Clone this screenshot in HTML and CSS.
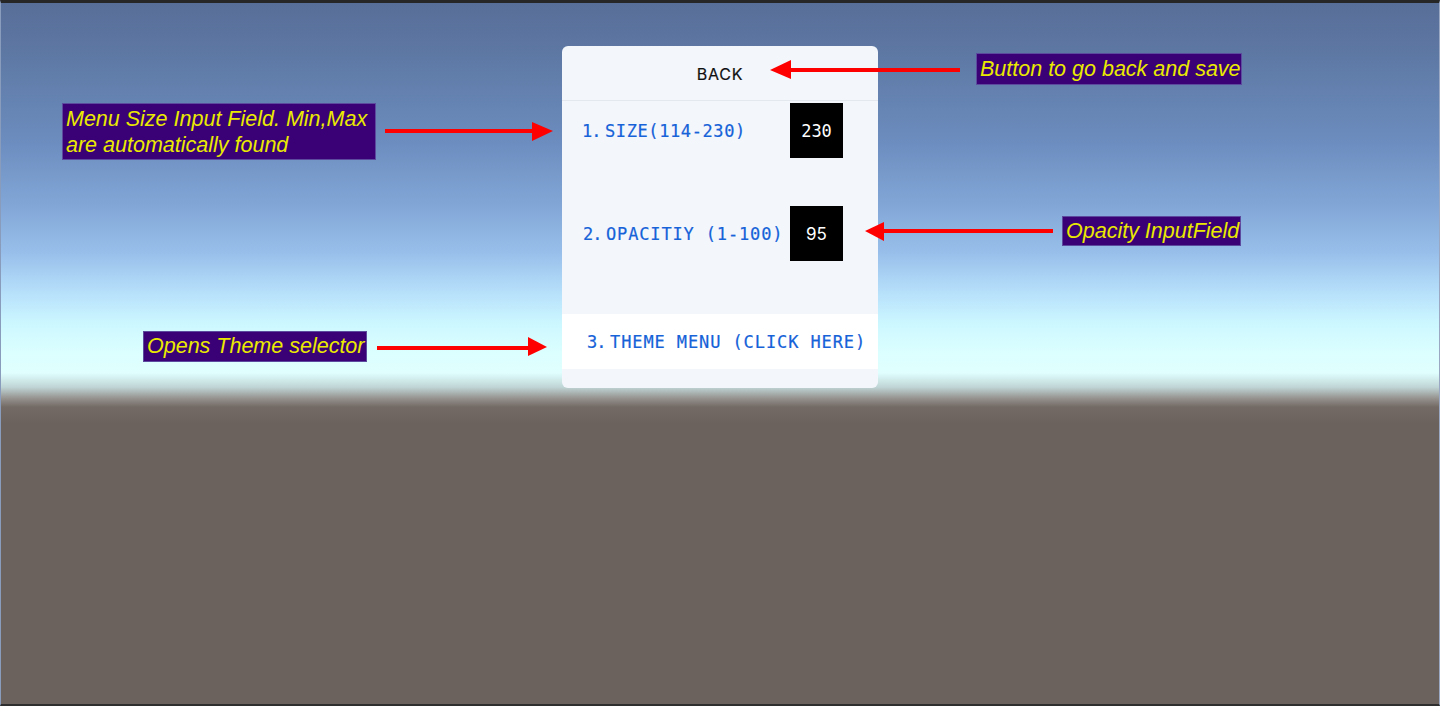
FILE: index.html
```html
<!DOCTYPE html>
<html>
<head>
<meta charset="utf-8">
<link rel="stylesheet" href="styles.css">
</head>
<body>
<div class="scene">
  <div class="panel">
    <div class="header">BACK</div>
    <div class="row row-size">
      <span class="label"><span class="num">1.</span>SIZE(114-230)</span>
      <div class="field mono">230</div>
    </div>
    <div class="row row-opacity">
      <span class="label"><span class="num">2.</span>OPACITIY (1-100)</span>
      <div class="field">95</div>
    </div>
    <div class="theme"><span class="num">3.</span>THEME MENU (CLICK HERE)</div>
  </div>

  <div class="note note-size">Menu Size Input Field. Min,Max<br>are automatically found</div>
  <div class="note note-back">Button to go back and save</div>
  <div class="note note-opacity">Opacity InputField</div>
  <div class="note note-theme">Opens Theme selector</div>

  <svg class="arrows" width="1440" height="706" viewBox="0 0 1440 706">
    <g fill="#ff0000" stroke="none">
      <rect x="385" y="129" width="150" height="4"/>
      <polygon points="532,122 553,131 532,141"/>
      <rect x="789" y="68" width="171" height="4"/>
      <polygon points="791,60 770,70 791,79"/>
      <rect x="882" y="229" width="171" height="4"/>
      <polygon points="884,222 865,231 884,241"/>
      <rect x="377" y="346" width="153" height="4"/>
      <polygon points="528,337 547,347 528,356"/>
    </g>
  </svg>
</div>
</body>
</html>
```

FILE: styles.css
```css
* { box-sizing: border-box; }
html, body { margin: 0; padding: 0; }
body { width: 1440px; height: 706px; overflow: hidden; background: #262626; }

.scene {
  position: relative;
  width: 1440px;
  height: 706px;
  padding-top: 46px;
  border-top: 3px solid #262626;
  border-left: 1px solid #8a9cbc;
  border-right: 1px solid #9aa8c4;
  border-bottom: 2px solid #2e2e2e;
  background: linear-gradient(to bottom,
    #576e98 0px,
    #5f7aa6 60px,
    #6c8dbf 140px,
    #81a6d6 200px,
    #98bfea 250px,
    #b7e0fb 290px,
    #ccf7ff 320px,
    #dcffff 350px,
    #e0fefe 370px,
    #c0d6d6 384px,
    #938f8b 396px,
    #736a65 404px,
    #6b625d 420px,
    #6b625d 100%);
  font-family: "Liberation Sans", Arial, sans-serif;
}

.panel {
  width: 316px;
  height: 342px;
  margin: 0 auto;
  position: relative;
  top: -3px;
  background: #f3f7fc;
  border-radius: 6px;
  display: flex;
  flex-direction: column;
  overflow: hidden;
}

.header {
  height: 55px;
  border-bottom: 1px solid #e3e7ee;
  display: flex;
  align-items: center;
  justify-content: center;
  font-family: "Inter", "Liberation Sans", sans-serif;
  font-size: 16px;
  letter-spacing: 0.8px;
  color: #111111;
  padding-top: 2px;
  -webkit-text-stroke: 0.2px #111111;
}

.row {
  height: 55px;
  display: flex;
  align-items: center;
  padding-left: 20px;
}
.row-size { margin-top: 2px; }
.row-opacity { margin-top: 48px; padding-left: 21px; }

.label {
  font-family: "DejaVu Sans Mono", "Liberation Mono", monospace;
  font-size: 17px;
  letter-spacing: 0.6px;
  color: #1662d8;
  width: 208px;
  white-space: nowrap;
  -webkit-text-stroke: 0.2px #1662d8;
}
.row-opacity .label { width: 207px; letter-spacing: 0.85px; }

.num {
  display: inline-block;
  width: 23px;
  letter-spacing: -1px;
}

.field {
  width: 53px;
  height: 55px;
  background: #000000;
  color: #ffffff;
  display: flex;
  align-items: center;
  justify-content: center;
  font-family: "Inter", "Liberation Sans", sans-serif;
  font-size: 17px;
}
.field.mono {
  font-family: "DejaVu Sans Mono", "Liberation Mono", monospace;
  font-size: 17px;
}

.theme {
  margin-top: 53px;
  height: 55px;
  background: #ffffff;
  display: flex;
  align-items: center;
  padding-left: 25px;
  font-family: "DejaVu Sans Mono", "Liberation Mono", monospace;
  font-size: 17px;
  letter-spacing: 0.9px;
  color: #1662d8;
  white-space: nowrap;
  -webkit-text-stroke: 0.2px #1662d8;
}

.note {
  position: absolute;
  background: #3a0076;
  border: 1px solid #5b4a9e;
  color: #eaea00;
  font-style: italic;
  font-size: 21.5px;
  white-space: nowrap;
  padding: 0 3px;
}
.note-size { left: 61px; top: 100px; width: 314px; height: 57px; line-height: 26px; padding-top: 2px; }
.note-back { left: 975px; top: 50px; width: 266px; height: 32px; line-height: 30px; }
.note-opacity { left: 1061px; top: 213px; width: 179px; height: 30px; line-height: 28px; }
.note-theme { left: 142px; top: 328px; width: 224px; height: 31px; line-height: 29px; }

.arrows { position: absolute; left: -1px; top: -3px; }
```
